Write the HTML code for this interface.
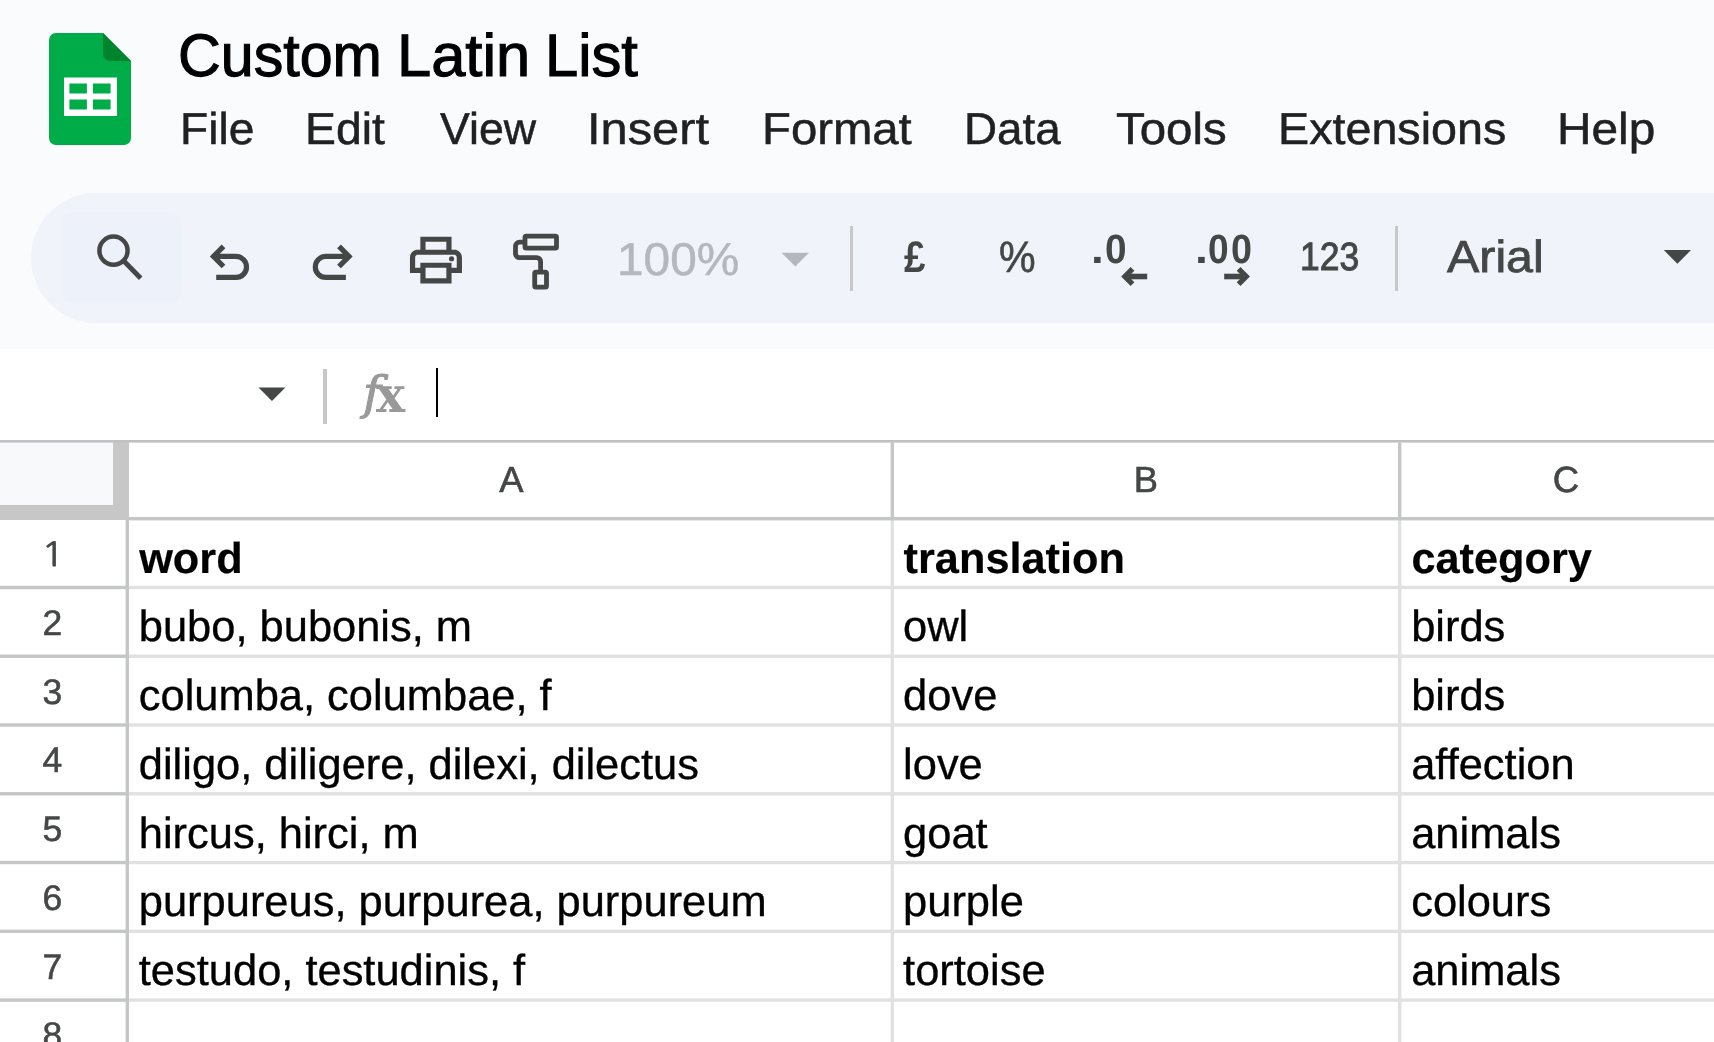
<!DOCTYPE html>
<html lang="en">
<head>
<meta charset="utf-8">
<title>Custom Latin List - Google Sheets</title>
<style>
html,body{margin:0;padding:0}
body{width:1714px;height:1042px;overflow:hidden;background:#fff;position:relative;font-family:'Liberation Sans',Arial,sans-serif;text-rendering:geometricPrecision}
div,span,svg{position:absolute;box-sizing:border-box}
.t{white-space:pre;line-height:1;transform-origin:0 0;display:block}
#app{left:0;top:0;width:1714px;height:1042px;will-change:transform}
#header{left:0;top:0;width:1714px;height:349px;background:#f9fbfd}
#toolbar{left:31px;top:193px;width:1800px;height:130px;border-radius:65px;background:#f0f3fa}
#search{left:30px;top:19px;width:120px;height:91px;border-radius:13px;background:#edf1f9}
.sep{width:3px;background:#c7c7c7}
#formula{left:0;top:349px;width:1714px;height:91px;background:#fff}
#grid{left:0;top:440px;width:1714px;height:602px;background:#fff;overflow:hidden}
.cell{font-size:43.45px;color:#000;-webkit-text-stroke:0.35px #000;white-space:pre;line-height:1;display:block}
.b{font-size:43.3px;font-weight:700;-webkit-text-stroke:0.2px #000}
.rn{font-size:35.5px;color:#444746;-webkit-text-stroke:0.55px #444746;width:80px;text-align:center;line-height:1;display:block}
.ch{font-size:36.4px;color:#444746;-webkit-text-stroke:0.6px #444746;width:80px;text-align:center;line-height:1;display:block}
</style>
</head>
<body>
<div id="app">

<div id="header">
<svg class="ico" style="left:45px;top:29px" width="90" height="120" viewBox="45 29 90 120" ><path d="M56 33H103L131 61V138a7 7 0 0 1-7 7H56a7 7 0 0 1-7-7V40a7 7 0 0 1 7-7z" fill="#00ac47"/><path d="M103 33L131 61H110a7 7 0 0 1-7-7z" fill="#00832d"/><path d="M64 77.5H117V116H64z M69.4 83.6V93.6H86.9V83.6z M92.9 83.6V93.6H110.6V83.6z M69.4 99.4V109.4H86.9V99.4z M92.9 99.4V109.4H110.6V99.4z" fill="#fff" fill-rule="evenodd"/></svg>
<div id="title" style="left:0;top:0"><span class="t" style="left:177.83px;top:26.00px;font-size:60.0px;color:#000;transform:scaleX(0.9861);-webkit-text-stroke:1.1px #000;">Custom</span> <span class="t" style="left:396.90px;top:26.00px;font-size:60.0px;color:#000;transform:scaleX(1.0244);-webkit-text-stroke:1.1px #000;">Latin</span> <span class="t" style="left:544.72px;top:26.00px;font-size:60.0px;color:#000;transform:scaleX(0.9956);-webkit-text-stroke:1.1px #000;">List</span></div>
<div id="menubar" style="left:0;top:0"><span class="t" style="left:179.90px;top:108.00px;font-size:44.6px;color:#202124;transform:scaleX(1.0343);-webkit-text-stroke:0.5px #202124;">File</span> <span class="t" style="left:305.18px;top:108.00px;font-size:44.6px;color:#202124;transform:scaleX(1.0405);-webkit-text-stroke:0.5px #202124;">Edit</span> <span class="t" style="left:439.50px;top:108.00px;font-size:44.6px;color:#202124;transform:scaleX(1.0031);-webkit-text-stroke:0.5px #202124;">View</span> <span class="t" style="left:587.42px;top:108.00px;font-size:44.6px;color:#202124;transform:scaleX(1.0944);-webkit-text-stroke:0.5px #202124;">Insert</span> <span class="t" style="left:762.02px;top:108.00px;font-size:44.6px;color:#202124;transform:scaleX(1.0601);-webkit-text-stroke:0.5px #202124;">Format</span> <span class="t" style="left:964.42px;top:108.00px;font-size:44.6px;color:#202124;transform:scaleX(1.0272);-webkit-text-stroke:0.5px #202124;">Data</span> <span class="t" style="left:1116.30px;top:108.00px;font-size:44.6px;color:#202124;transform:scaleX(1.0631);-webkit-text-stroke:0.5px #202124;">Tools</span> <span class="t" style="left:1277.76px;top:108.00px;font-size:44.6px;color:#202124;transform:scaleX(1.0467);-webkit-text-stroke:0.5px #202124;">Extensions</span> <span class="t" style="left:1556.99px;top:108.00px;font-size:44.6px;color:#202124;transform:scaleX(1.0713);-webkit-text-stroke:0.5px #202124;">Help</span></div>
<div id="toolbar"><div id="search"></div>
<svg class="ico" style="left:61px;top:37px" width="56" height="56" viewBox="61 37 56 56" ><g transform="translate(-31 -193)"><g fill="none" stroke="#444746"><circle cx="113.5" cy="250.7" r="14.1" stroke-width="4.5"/><path d="M123.6 260.8L140.7 278.2" stroke-width="4.9"/></g></g></svg>
<svg class="ico" style="left:174px;top:45px" width="50" height="50" viewBox="174 45 50 50" ><g transform="translate(-31 -193)"><g fill="none" stroke="#444746" stroke-width="5.2"><path d="M223.5 246.3L213.5 256.4L223.5 266.5"/><path d="M213.5 256.4H236A10.5 10.5 0 0 1 236 277.4H216.2"/></g></g></svg>
<svg class="ico" style="left:276px;top:45px" width="50" height="50" viewBox="276 45 50 50" ><g transform="translate(-31 -193)"><g fill="none" stroke="#444746" stroke-width="5.2"><path d="M339 246.3L349 256.4L339 266.5"/><path d="M349 256.4H325.8A10.5 10.5 0 0 0 325.8 277.4H345.9"/></g></g></svg>
<svg class="ico" style="left:373px;top:35px" width="64" height="64" viewBox="373 35 64 64" ><g transform="translate(-31 -193)"><g transform="translate(404.75 228.85) scale(2.6)" fill="#444746"><path d="M19 8h-1V3H6v5H5c-1.66 0-3 1.34-3 3v6h4v4h12v-4h4v-6c0-1.66-1.34-3-3-3zM8 5h8v3H8V5zm8 14H8v-4h8v4zm2-4v-2H6v2H4v-4c0-.55.45-1 1-1h14c.55 0 1 .45 1 1v4h-2z"/><circle cx="18" cy="11.5" r="1"/></g></g></svg>
<svg class="ico" style="left:477px;top:35px" width="58" height="66" viewBox="477 35 58 66" ><g transform="translate(-31 -193)"><g fill="none" stroke="#444746" stroke-width="4.8" stroke-linejoin="round"><rect x="525" y="236.2" width="31.5" height="11.9" rx="1.2"/><path d="M525 242.2H519.5A4 4 0 0 0 515.5 246.2V253.6A4 4 0 0 0 519.5 257.6H536.6A4 4 0 0 1 540.6 261.6V272"/><rect x="534.7" y="272.1" width="11.8" height="15.1" rx="1.2"/></g></g></svg>
<svg class="ico" style="left:747px;top:57px" width="36" height="20" viewBox="747 57 36 20" ><g transform="translate(-31 -193)"><path d="M781.5 252.7H809L795.25 266.5z" fill="#b4b7bb"/></g></svg>
<div class="sep" style="left:819px;top:33px;height:65px"></div>
<svg class="ico" style="left:1087px;top:71px" width="32" height="26" viewBox="1087 71 32 26" ><g transform="translate(-31 -193)"><g fill="none" stroke="#444746" stroke-width="5.3"><path d="M1132.5 268.85L1124.9 276.5L1132.5 284.15"/><path d="M1124.9 276.5H1147.2" stroke-width="5.6"/></g></g></svg>
<svg class="ico" style="left:1190px;top:71px" width="32" height="26" viewBox="1190 71 32 26" ><g transform="translate(-31 -193)"><g fill="none" stroke="#444746" stroke-width="5.3"><path d="M1238.6 268.85L1246.2 276.5L1238.6 284.15"/><path d="M1246.2 276.5H1224.2" stroke-width="5.6"/></g></g></svg>
<div class="sep" style="left:1364px;top:33px;height:65px"></div>
<svg class="ico" style="left:1629px;top:54px" width="36" height="20" viewBox="1629 54 36 20" ><g transform="translate(-31 -193)"><path d="M1663.8 250.1H1691L1677.4 263.8z" fill="#444746"/></g></svg>
<span class="t" style="left:585.88px;top:43.00px;font-size:46px;color:#b4b7bb;transform:scaleX(1.0389);-webkit-text-stroke:0.5px #b4b7bb;">100%</span> <span class="t" style="left:872.80px;top:43.00px;font-size:44px;color:#444746;transform:scaleX(0.8750);font-weight:700;">£</span> <span class="t" style="left:968.26px;top:43.00px;font-size:44px;color:#444746;transform:scaleX(0.9351);-webkit-text-stroke:0.6px #444746;">%</span> <span class="t" style="left:1268.81px;top:45.00px;font-size:39.5px;color:#444746;transform:scaleX(0.8968);-webkit-text-stroke:1px #444746;">123</span> <span class="t" style="left:1415.90px;top:41.00px;font-size:45.0px;color:#444746;transform:scaleX(1.0750);-webkit-text-stroke:0.8px #444746;">Arial</span>
<div id="dec-decrease" style="left:0;top:0"><span class="t" style="left:1060.45px;top:36.00px;font-size:41px;color:#444746;transform:scaleX(1.1167);font-weight:700;">.</span><span class="t" style="left:1074.06px;top:36.00px;font-size:41px;color:#444746;transform:scaleX(0.9450);font-weight:700;">0</span></div>
<div id="dec-increase" style="left:0;top:0"><span class="t" style="left:1163.50px;top:36.00px;font-size:41px;color:#444746;transform:scaleX(1.1333);font-weight:700;">.</span><span class="t" style="left:1177.30px;top:36.00px;font-size:41px;color:#444746;transform:scaleX(0.9050);font-weight:700;">0</span><span class="t" style="left:1200.08px;top:36.00px;font-size:41px;color:#444746;transform:scaleX(0.9200);font-weight:700;">0</span></div>
</div>
</div>
<div id="formula">
<svg class="ico" style="left:255px;top:36px" width="36" height="20" viewBox="255 36 36 20" ><g transform="translate(0 -349)"><path d="M258.5 387.6H285.4L271.95 401z" fill="#444746"/></g></svg>
<div class="sep" style="left:323px;top:20px;height:55px;width:4px"></div>
<span class="t" style="left:363.14px;top:21.00px;font-size:46.19px;color:#999;transform:scaleX(1.0481);font-style:italic;font-family:'DejaVu Serif',serif;-webkit-text-stroke:1px #999;">f</span><span class="t" style="left:376.40px;top:21.00px;font-size:49.81px;color:#999;transform:scaleX(0.9800);font-weight:700;font-family:'DejaVu Serif',serif;">x</span>
<div id="caret" style="left:436px;top:19px;width:2px;height:49px;background:#000"></div>
</div>
<div id="grid">
<div id="corner" style="left:0;top:2px;width:129px;height:78px;background:#c7c7c7"><div style="left:0;top:0;width:113px;height:63px;background:#f8f9fa"></div></div>
<svg id="gridlines" style="left:0;top:0" width="1714" height="602" viewBox="0 0 1714 602"><rect x="890.60" y="80.40" width="3.40" height="700.00" fill="#e1e1e1"/><rect x="1398.00" y="80.40" width="3.40" height="700.00" fill="#e1e1e1"/><rect x="129.00" y="145.77" width="1700.00" height="3.40" fill="#e1e1e1"/><rect x="129.00" y="214.54" width="1700.00" height="3.40" fill="#e1e1e1"/><rect x="129.00" y="283.31" width="1700.00" height="3.40" fill="#e1e1e1"/><rect x="129.00" y="352.08" width="1700.00" height="3.40" fill="#e1e1e1"/><rect x="129.00" y="420.85" width="1700.00" height="3.40" fill="#e1e1e1"/><rect x="129.00" y="489.62" width="1700.00" height="3.40" fill="#e1e1e1"/><rect x="129.00" y="558.39" width="1700.00" height="3.40" fill="#e1e1e1"/><rect x="129.00" y="627.16" width="1700.00" height="3.40" fill="#e1e1e1"/><rect x="0.00" y="-0.10" width="1714.00" height="2.70" fill="#c0c0c0"/><rect x="129.00" y="77.00" width="1700.00" height="3.40" fill="#c4c7c5"/><rect x="890.60" y="2.40" width="3.40" height="78.00" fill="#c4c7c5"/><rect x="1398.00" y="2.40" width="3.40" height="78.00" fill="#c4c7c5"/><rect x="125.60" y="77.00" width="3.40" height="700.00" fill="#c4c7c5"/><rect x="0.00" y="145.77" width="129.00" height="3.40" fill="#c4c7c5"/><rect x="0.00" y="214.54" width="129.00" height="3.40" fill="#c4c7c5"/><rect x="0.00" y="283.31" width="129.00" height="3.40" fill="#c4c7c5"/><rect x="0.00" y="352.08" width="129.00" height="3.40" fill="#c4c7c5"/><rect x="0.00" y="420.85" width="129.00" height="3.40" fill="#c4c7c5"/><rect x="0.00" y="489.62" width="129.00" height="3.40" fill="#c4c7c5"/><rect x="0.00" y="558.39" width="129.00" height="3.40" fill="#c4c7c5"/><rect x="0.00" y="627.16" width="129.00" height="3.40" fill="#c4c7c5"/></svg>
<span class="ch" style="left:471.4px;top:22.00px">A</span>
<span class="ch" style="left:1106.0px;top:22.00px">B</span>
<span class="ch" style="left:1526.0px;top:22.00px">C</span>
<span class="t rn1" style="left:41.34px;top:98.00px;font-size:33.29px;color:#444746;transform:scaleX(1.1889);font-family:'NanumGothic','Liberation Sans',sans-serif;-webkit-text-stroke:0.6px #444746;">1</span>
<span class="cell b" style="left:139.2px;top:98.00px">word</span>
<span class="cell b" style="left:903.6px;top:98.00px">translation</span>
<span class="cell b" style="left:1411.4px;top:98.00px">category</span>
<span class="rn" style="left:12.3px;top:166.00px">2</span>
<span class="cell" style="left:138.8px;top:166.00px">bubo, bubonis, m</span>
<span class="cell" style="left:903.1px;top:166.00px">owl</span>
<span class="cell" style="left:1411.2px;top:166.00px">birds</span>
<span class="rn" style="left:12.3px;top:235.00px">3</span>
<span class="cell" style="left:138.8px;top:235.00px">columba, columbae, f</span>
<span class="cell" style="left:903.1px;top:235.00px">dove</span>
<span class="cell" style="left:1411.2px;top:235.00px">birds</span>
<span class="rn" style="left:12.3px;top:303.00px">4</span>
<span class="cell" style="left:138.8px;top:304.00px">diligo, diligere, dilexi, dilectus</span>
<span class="cell" style="left:903.1px;top:304.00px">love</span>
<span class="cell" style="left:1411.2px;top:304.00px">affection</span>
<span class="rn" style="left:12.3px;top:372.00px">5</span>
<span class="cell" style="left:138.8px;top:373.00px">hircus, hirci, m</span>
<span class="cell" style="left:903.1px;top:373.00px">goat</span>
<span class="cell" style="left:1411.2px;top:373.00px">animals</span>
<span class="rn" style="left:12.3px;top:441.00px">6</span>
<span class="cell" style="left:138.8px;top:441.00px">purpureus, purpurea, purpureum</span>
<span class="cell" style="left:903.1px;top:441.00px">purple</span>
<span class="cell" style="left:1411.2px;top:441.00px">colours</span>
<span class="rn" style="left:12.3px;top:510.00px">7</span>
<span class="cell" style="left:138.8px;top:510.00px">testudo, testudinis, f</span>
<span class="cell" style="left:903.1px;top:510.00px">tortoise</span>
<span class="cell" style="left:1411.2px;top:510.00px">animals</span>
<span class="rn" style="left:12.3px;top:578.00px">8</span>
</div>
</div>
</body>
</html>
